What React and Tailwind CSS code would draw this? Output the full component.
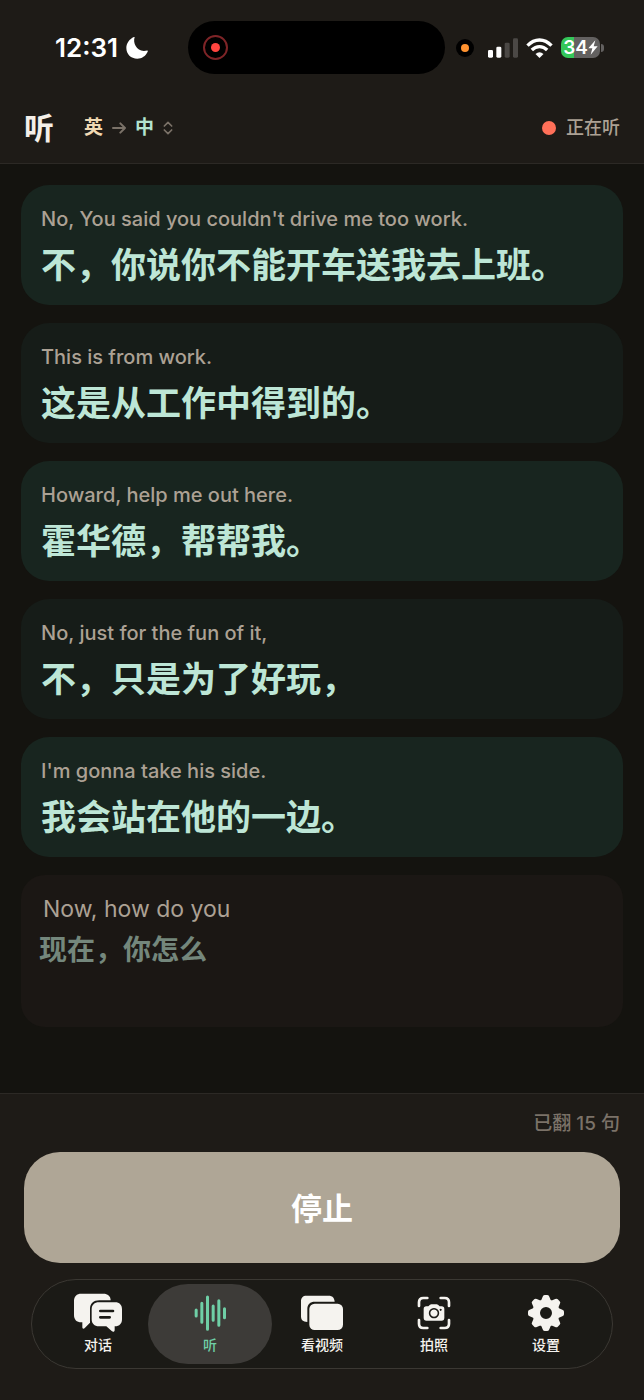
const lines = [
  { en: "No, You said you couldn't drive me too work.", zh: "不，你说你不能开车送我去上班。" },
  { en: "This is from work.", zh: "这是从工作中得到的。" },
  { en: "Howard, help me out here.", zh: "霍华德，帮帮我。" },
  { en: "No, just for the fun of it,", zh: "不，只是为了好玩，" },
  { en: "I'm gonna take his side.", zh: "我会站在他的一边。" },
];

const gearTeeth = [0, 45, 90, 135, 180, 225, 270, 315];

function ChatIcon() {
  return (
    <svg viewBox="221 100 150 120" className="h-10 w-[50px]" fill="currentColor">
      <path d="M246 102H312C325 102 334 109 334 122H300C283 122 272 132 272 148V189L257 204C253 209 249 208 249 202V188H246C232 188 224 180 224 166V124C224 110 232 102 246 102Z" />
      <path
        fillRule="evenodd"
        d="M299 128H347C361 128 368 136 368 149V179C368 192 361 200 347 200H346V211C346 217 341 218 337 214L321 200H299C285 200 277 192 277 179V149C277 136 285 128 299 128ZM303 150a4 4 0 0 0 0 8H341a4 4 0 0 0 0-8ZM303 169a4 4 0 0 0 0 8H331a4 4 0 0 0 0-8Z"
      />
    </svg>
  );
}

function WaveIcon() {
  return (
    <svg viewBox="571 100 120 120" className="h-10 w-10" stroke="currentColor" strokeWidth="9" strokeLinecap="round">
      <path d="M589.500 151V169M606.500 131V188M623.500 112V209M640.500 139V182M657.500 123V197M674.500 147V174" />
    </svg>
  );
}

function VideoIcon() {
  return (
    <svg viewBox="891 100 150 120" className="h-10 w-[50px]" fill="currentColor">
      <path d="M919 108H986C997 108 1003 114 1004 126H945C930 126 922 134 922 148V187C909 187 903 181 903 170V125C903 114 909 108 919 108Z" />
      <rect x="928" y="132" width="101" height="79" rx="16" />
    </svg>
  );
}

function CameraIcon() {
  return (
    <svg viewBox="274 100 120 120" className="h-10 w-10" fill="none" stroke="currentColor" strokeLinecap="round">
      <path
        strokeWidth="8"
        d="M289 139V128Q289 115 302 115H314M354 115H366Q379 115 379 128V139M379 181V192Q379 205 366 205H354M314 205H302Q289 205 289 192V181"
      />
      <path
        stroke="none"
        fill="currentColor"
        fillRule="evenodd"
        d="M311 140H317L322 135Q323 134 326 134H342Q345 134 346 135L351 140H357Q365 140 365 148V174Q365 183 357 183H311Q303 183 303 174V148Q303 140 311 140ZM334 145a15.500 15.500 0 1 0 0.010 0ZM334 149.500a11 11 0 1 1-0.010 0ZM354 147a3 3 0 1 0 0.010 0Z"
      />
    </svg>
  );
}

function GearIcon() {
  return (
    <svg viewBox="-60 -60 120 120" className="h-10 w-10" fill="currentColor">
      <circle r="29.500" fill="none" stroke="currentColor" strokeWidth="23" />
      {gearTeeth.map((a) => (
        <path key={a} transform={`rotate(${a})`} d="M-15 -37L-10 -49Q-9 -54 -4 -54H4Q9 -54 10 -49L15 -37Z" />
      ))}
    </svg>
  );
}

const tabs = [
  { label: "对话", Icon: ChatIcon },
  { label: "听", Icon: WaveIcon, active: true },
  { label: "看视频", Icon: VideoIcon },
  { label: "拍照", Icon: CameraIcon },
  { label: "设置", Icon: GearIcon },
];

function StatusBar() {
  return (
    <div className="flex h-[95px] items-center pr-10">
      <div className="flex w-[188px] items-center gap-2 pl-[55px] text-white">
        <span className="text-[26px] leading-8 font-semibold">12:31</span>
        <svg viewBox="0 0 64 64" className="size-[22px]" fill="currentColor">
          <path d="M25 1C19 19 33 47 62 39C63 39 64 41 63 43C57 56 46 63 33 63C14 63 1 50 1 32C1 18 10 6 23 0C25 0 26 0 25 1Z" />
        </svg>
      </div>
      <div className="flex h-[53px] w-[257px] items-center rounded-full bg-black pl-[15px]">
        <div className="flex size-[25px] items-center justify-center rounded-full border-2 border-[#7e2427]">
          <div className="size-[9px] rounded-full bg-[#ff453f]" />
        </div>
      </div>
      <div className="ml-auto flex items-center">
        <div className="mr-3.5 flex size-[18px] items-center justify-center rounded-full bg-black">
          <div className="size-2 rounded-full bg-[#ff9230]" />
        </div>
        <svg viewBox="0 0 90 60" className="mr-2 h-5 w-[30px]" fill="#fff">
          <rect x="0" y="36" width="15" height="23" rx="4" />
          <rect x="25" y="26" width="15" height="33" rx="4" />
          <rect x="50" y="14" width="15" height="45" rx="4" fill="#4b4845" />
          <rect x="75" y="1" width="15" height="58" rx="4" fill="#4b4845" />
        </svg>
        <svg viewBox="0 0 80 60" className="mr-2 h-5 w-[27px]" fill="none" stroke="#fff" strokeWidth="10">
          <path d="M4 23Q20 6 40 6T76 23" />
          <path d="M17 36Q27 26 40 26T63 36" />
          <path d="M40 60L28 48Q40 37 52 48Z" fill="#fff" stroke="none" />
        </svg>
        <div className="flex items-center gap-px">
          <div className="flex h-[21px] w-[39px] items-center justify-center rounded-[7px] bg-linear-to-r from-[#34c759] from-34% to-[#636160] to-34% text-white">
            <span className="text-[19px] leading-5 font-semibold">34</span>
            <svg viewBox="0 0 30 45" className="h-[15px] w-2.5" fill="currentColor">
              <path d="M22 1L1 25H13L8 44L29 19H17Z" />
            </svg>
          </div>
          <div className="h-2 w-[3px] rounded-r-full bg-[#636160]" />
        </div>
      </div>
    </div>
  );
}

export default function App() {
  return (
    <div className="flex min-h-screen flex-col bg-[#14130f] font-['Inter','Noto_Sans_CJK_SC',sans-serif]">
      <header className="border-b border-[#2c2925] bg-[#1e1b17]">
        <StatusBar />
        <div className="flex items-center px-6 pt-[11px] pb-[13px]">
          <h1 className="text-[30px] leading-[44px] font-bold text-[#f4efe8]">听</h1>
          <button className="ml-[30px] flex items-center gap-[9px] text-[19px] leading-7 font-semibold">
            <span className="text-[#f0d9b3]">英</span>
            <svg viewBox="0 0 42 36" className="h-3 w-3.5" fill="none" stroke="#7b7268" strokeWidth="6" strokeLinecap="round" strokeLinejoin="round">
              <path d="M3 18H39M25 4L39 18L25 32" />
            </svg>
            <span className="text-[#b4e3cf]">中</span>
            <svg viewBox="0 0 30 42" className="h-3.5 w-2.5" fill="none" stroke="#7b7268" strokeWidth="5" strokeLinecap="round" strokeLinejoin="round">
              <path d="M4 15L15 4L26 15M4 27L15 38L26 27" />
            </svg>
          </button>
          <div className="ml-auto flex items-center gap-2.5">
            <span className="size-3.5 rounded-full bg-[#ff7059]" />
            <span className="text-lg leading-7 font-medium text-[#aca194]">正在听</span>
          </div>
        </div>
      </header>

      <main className="flex flex-1 flex-col gap-[18px] px-[21px] pt-[21px]">
        {lines.map((l) => (
          <div key={l.en} className="rounded-[28px] bg-[#161c18] px-5 pt-5 pb-4 odd:bg-[#18251f]">
            <p className="text-xl leading-7 font-medium text-[#aca194]">{l.en}</p>
            <p className="mt-2 text-[35px] leading-[48px] font-semibold text-[#bde6d6]">{l.zh}</p>
          </div>
        ))}
        <div className="min-h-[152px] rounded-3xl bg-[#1b1714] px-[18px] pt-[18px]">
          <p className="pl-1 text-[23px] leading-8 text-[#aca194]">Now, how do you</p>
          <p className="mt-1 text-[28px] leading-[42px] font-semibold text-[#74877c]">现在，你怎么</p>
        </div>
      </main>

      <footer className="border-t border-[#2c2925] bg-[#1e1b17] px-6 pt-4 pb-[31px]">
        <p className="text-right text-[19px] leading-7 font-medium text-[#7b7268]">已翻 15 句</p>
        <button className="mt-3.5 h-[111px] w-full rounded-[36px] bg-[#afa696] pt-1 text-[31px] font-bold text-white">停止</button>
        <nav className="mx-[7px] mt-4 grid h-[90px] grid-cols-5 rounded-full border border-[#3b3833] bg-[#1b1a16] px-2.5 py-1">
          {tabs.map(({ label, Icon, active }) => (
            <button
              key={label}
              className={
                active
                  ? "-mx-1.5 flex flex-col items-center justify-center gap-0.5 rounded-full bg-[#3d3b38] text-[#6fcfa6]"
                  : "flex flex-col items-center justify-center gap-0.5 text-[#f5f3ef]"
              }
            >
              <Icon />
              <span className="text-sm leading-5 font-medium">{label}</span>
            </button>
          ))}
        </nav>
      </footer>
    </div>
  );
}
